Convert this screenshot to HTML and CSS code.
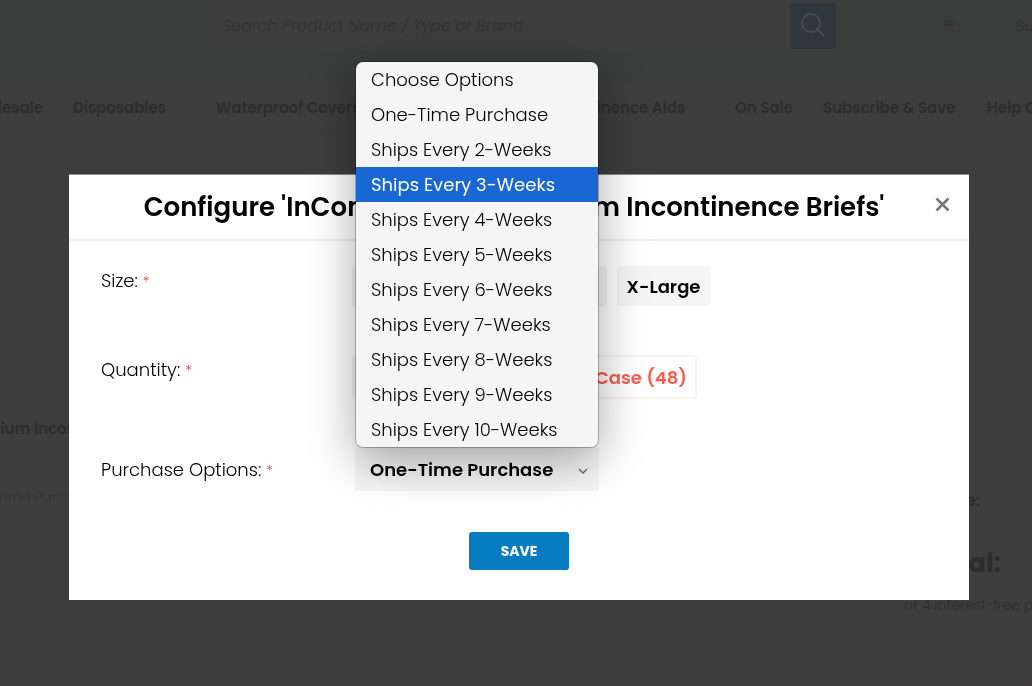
FILE: index.html
```html
<!DOCTYPE html>
<html lang="en">
<head>
<meta charset="utf-8">
<title>Configure product</title>
<link rel="stylesheet" href="styles.css">
</head>
<body>
<div class="page">
  <header class="header">
    <form class="search">
      <input class="search-input" type="text" aria-label="Search" placeholder="Search Product Name / Type or Brand">
      <button class="search-button" type="button" aria-label="Search">
        <svg width="26" height="26" viewBox="0 0 26 26" fill="none" stroke="currentColor" stroke-width="2"><circle cx="11" cy="10" r="9"/><path d="M17.500 16.500L24 23"/></svg>
      </button>
    </form>
    <div class="tools">
      <svg width="16" height="11" viewBox="0 0 16 11"><path fill="#3e3d3d" d="M0 0h16v11H0z"/><path stroke="#403636" d="M0 .5h16M0 2.500h16M0 4.500h16M0 6.500h16M0 8.500h16M0 10.500h16"/><path fill="#303238" d="M0 0h9v6H0z"/><path stroke="#3c3e42" stroke-dasharray="1 1" d="M1 1.500h7M1 3.500h7"/></svg>
      <svg class="caret" width="8" height="5" viewBox="0 0 8 5"><path d="M.5 .5L4 4L7.500 .5"/></svg>
      <a class="support" href="#">Support</a>
    </div>
  </header>
  <nav class="nav">
    <a class="nav-first" href="#">Wholesale</a>
    <a href="#">Disposables <svg class="caret" width="8" height="5" viewBox="0 0 8 5"><path d="M.5 .5L4 4L7.500 .5"/></svg></a>
    <a href="#">Waterproof Covers</a>
    <a class="nav-end" href="#">Incontinence Aids <svg class="caret" width="8" height="5" viewBox="0 0 8 5"><path d="M.5 .5L4 4L7.500 .5"/></svg></a>
    <a href="#">On Sale</a>
    <a href="#">Subscribe &amp; Save</a>
    <a href="#">Help Center</a>
  </nav>
  <main class="cart">
    <section class="item">
      <p class="item-name">Premium Incontinence Briefs</p>
      <p class="item-option">One-Time Purchase</p>
    </section>
    <section class="summary">
      <p class="price">Price:</p>
      <p class="total">Total:</p>
      <p class="installments">or 4 interest-free payments</p>
    </section>
  </main>
</div>

<div class="overlay">
  <div class="modal" role="dialog" aria-labelledby="modal-title">
    <div class="modal-header">
      <h2 class="modal-title" id="modal-title">Configure 'InControl BeDry Premium Incontinence Briefs'</h2>
      <button class="close" type="button" aria-label="Close">
        <svg width="15" height="15" viewBox="0 0 15 15"><path d="M1.500 1.500L13.500 13.500M13.500 1.500L1.500 13.500" stroke="#757575" stroke-width="2.500"/></svg>
      </button>
    </div>
    <form class="modal-body">
      <div class="field" role="radiogroup" aria-labelledby="size-label">
        <span class="label" id="size-label">Size: <small>*</small></span>
        <div class="sizes">
          <label class="chip"><input type="radio" name="size">Small</label>
          <label class="chip"><input type="radio" name="size">Medium</label>
          <label class="chip"><input type="radio" name="size">Large</label>
          <label class="chip"><input type="radio" name="size">X-Large</label>
        </div>
      </div>
      <div class="field" role="radiogroup" aria-labelledby="quantity-label">
        <span class="label" id="quantity-label">Quantity: <small>*</small></span>
        <div class="quantities">
          <label class="chip"><input type="radio" name="quantity">Bag (12)</label>
          <label class="chip chip-active"><input type="radio" name="quantity" checked>Case (48)</label>
        </div>
      </div>
      <div class="field field-last">
        <label class="label" for="purchase">Purchase Options: <small>*</small></label>
        <div class="picker">
          <select class="select" id="purchase">
            <option>One-Time Purchase</option>
          </select>
          <svg class="picker-caret" width="10" height="6" viewBox="0 0 10 6"><path d="M1 1L5 5L9 1" fill="none" stroke="#666" stroke-width="1.300"/></svg>
          <ul class="menu" role="listbox" aria-label="Purchase Options">
            <li role="option">Choose Options</li>
            <li role="option">One-Time Purchase</li>
            <li role="option">Ships Every 2-Weeks</li>
            <li class="highlighted" role="option" aria-selected="true">Ships Every 3-Weeks</li>
            <li role="option">Ships Every 4-Weeks</li>
            <li role="option">Ships Every 5-Weeks</li>
            <li role="option">Ships Every 6-Weeks</li>
            <li role="option">Ships Every 7-Weeks</li>
            <li role="option">Ships Every 8-Weeks</li>
            <li role="option">Ships Every 9-Weeks</li>
            <li role="option">Ships Every 10-Weeks</li>
          </ul>
        </div>
      </div>
      <button class="save" type="button">SAVE</button>
    </form>
  </div>
</div>
</body>
</html>
```

FILE: styles.css
```css
* { box-sizing: border-box; }

body {
  margin: 0;
  font-family: Poppins, Inter, sans-serif;
  font-size: 18px;
  color: #000;
  background: #3d3d3d;
}

p, h2, ul { margin: 0; padding: 0; }
a { color: inherit; text-decoration: none; }
button, input, select { font: inherit; }

/* Dimmed shop page */
.page {
  min-height: 100vh;
  overflow: hidden;
  color: #2d2d2d;
  border-bottom: 1px solid #403a3c;
}

.header {
  display: flex;
  justify-content: space-between;
  height: 82px;
  padding-left: 210px;
  background: #3b3d3c;
}

.search {
  display: flex;
  align-items: center;
  width: 627px;
  height: 51px;
  padding-right: 1px;
  background: #3d3d3d;
}

.search-input {
  flex: 1;
  padding: 0 12px;
  border: 0;
  background: none;
  font-size: 16px;
  font-style: italic;
  font-weight: 300;
}
.search-input::placeholder { color: #323232; opacity: 1; }

.search-button {
  display: grid;
  place-items: center;
  width: 46px;
  height: 46px;
  padding: 0;
  border: 0;
  border-radius: 2px;
  color: #464a4c;
  background: #30373c;
}

.tools {
  display: flex;
  align-items: center;
  gap: 8px;
  width: 88px;
  height: 51px;
  font-size: 15px;
  font-weight: 300;
  white-space: nowrap;
}
.tools svg { flex-shrink: 0; }
.support { padding-left: 32px; }

.caret { fill: none; stroke: #383838; }

.nav {
  display: grid;
  grid-template-columns: 43px 113px 168px 291px 58px 134px 1fr;
  column-gap: 30px;
  align-items: center;
  height: 54px;
  padding-bottom: 2px;
  border-bottom: 1px solid #3b3b3b;
  font-size: 15px;
  font-weight: 600;
  white-space: nowrap;
}
.nav a { display: flex; align-items: center; gap: 12px; }
.nav .nav-first,
.nav .nav-end { justify-content: flex-end; }

.cart { display: flex; justify-content: space-between; }

.item {
  padding-top: 281px;
  white-space: nowrap;
}
.item p { display: flex; justify-content: flex-end; line-height: 24px; }
.item-name { width: 180px; font-size: 15px; font-weight: 600; }
.item-option { width: 99px; margin-top: 44px; font-size: 14px; font-weight: 300; color: #343434; }

.summary {
  width: 128px;
  padding-top: 353px;
  white-space: nowrap;
}
.price { width: 76px; text-align: right; font-size: 16px; font-weight: 600; line-height: 24px; }
.total { width: 97px; margin-top: 32px; text-align: right; font-size: 26px; font-weight: 700; line-height: 36px; }
.installments { margin-top: 12px; font-size: 14px; font-weight: 300; line-height: 24px; }

/* Dialog */
.overlay {
  position: fixed;
  inset: 0;
  padding: 175px 63px 0 69px;
}

.modal { background: #fff; box-shadow: 0 -1px #8a8a8a; }

.modal-header {
  display: flex;
  align-items: center;
  height: 66px;
  padding: 0 19px 0 24px;
  border-bottom: 2px solid #f0f0f0;
}

.modal-title {
  flex: 1;
  text-align: center;
  font-size: 26px;
  font-weight: 600;
  line-height: 36px;
  white-space: nowrap;
}

.close {
  display: grid;
  padding: 0 0 6px;
  border: 0;
  background: none;
}

.modal-body {
  display: flex;
  flex-direction: column;
  padding: 25px 32px 30px;
}

.field {
  display: grid;
  grid-template-columns: 251px 1fr;
  align-items: start;
  height: 89px;
}
.field-last { height: 85px; margin-top: 3px; }

.label { padding-top: 1px; line-height: 28px; font-weight: 300; }
.label small { color: #f33; font-size: 14px; }
.field-last .label { padding-top: 9px; }

.sizes, .quantities { display: grid; column-gap: 10px; }
.sizes { grid-template-columns: 73px 90px 72px 93px; }
.quantities { grid-template-columns: 223px 112px; }

.chip {
  display: grid;
  place-items: center;
  height: 40px;
  border-radius: 3px;
  background: #f5f5f5;
  font-weight: 600;
  white-space: nowrap;
}
.chip input { appearance: none; position: absolute; margin: 0; }
.quantities .chip { height: 44px; }
.quantities .chip-active { color: #ff5a4d; background: #fff; border: 2px solid #fcf2ec; }

.picker {
  position: relative;
  width: 244px;
  margin-left: 3px;
}

.select {
  width: 100%;
  height: 44px;
  padding: 0 15px;
  border: 0;
  border-radius: 2px;
  appearance: none;
  background: #f5f5f5;
  color: #000;
  font-weight: 600;
}

.picker-caret { position: absolute; right: 11px; top: 21px; }

.menu {
  position: absolute;
  left: 1px;
  right: 1px;
  bottom: 100%;
  overflow: hidden;
  border-radius: 7px;
  background: #f5f5f5;
  box-shadow: 0 0 0 1px rgba(0, 0, 0, 0.25), 0 12px 48px rgba(0, 0, 0, 0.36);
  list-style: none;
  font-weight: 300;
  line-height: 35px;
  white-space: nowrap;
}
.menu li { padding: 0 15px; }
.menu .highlighted { background: #1966d5; color: #fff; font-weight: 400; }

.save {
  align-self: center;
  width: 100px;
  height: 38px;
  border: 0;
  border-radius: 3px;
  background: #077cc1;
  color: #fff;
  font-size: 14px;
  font-weight: 700;
}
```
